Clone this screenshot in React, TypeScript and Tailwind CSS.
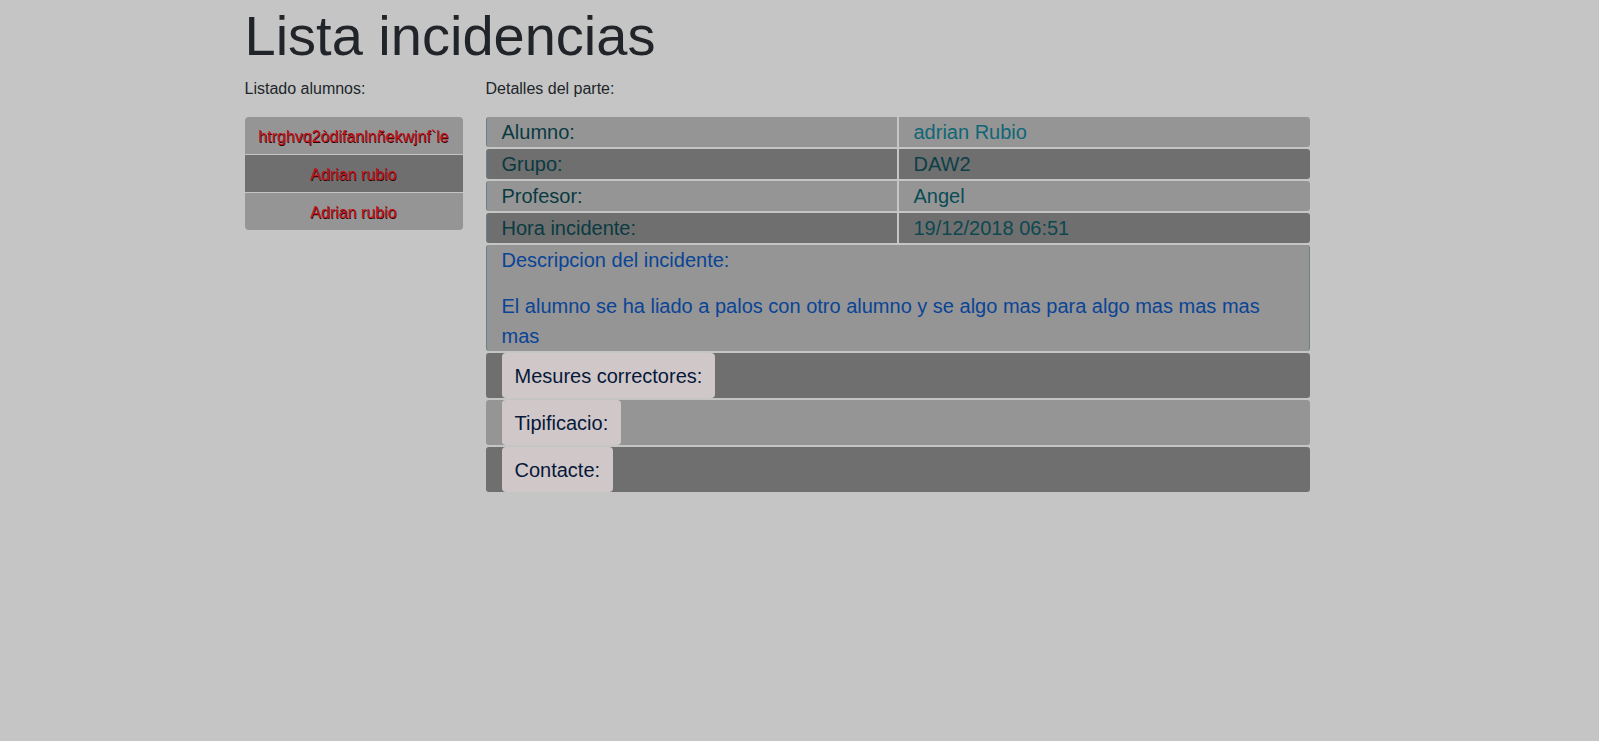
const alumnos = ["htrghvq2òdifanlnñekwjnf`le", "Adrian rubio", "Adrian rubio"];

const detalles = [
  { label: "Alumno:", value: "adrian Rubio", valueColor: "text-[#0f6676]" },
  { label: "Grupo:", value: "DAW2", valueColor: "text-[#0c3f47]" },
  { label: "Profesor:", value: "Angel", valueColor: "text-[#0a4c55]" },
  { label: "Hora incidente:", value: "19/12/2018 06:51", valueColor: "text-[#0c4850]" },
];

const extras = ["Mesures correctores:", "Tipificacio:", "Contacte:"];

function rowBg(i: number) {
  return i % 2 === 0 ? "bg-[#959595]" : "bg-[#6f6f6f]";
}

export default function App() {
  return (
    <div className="min-h-[741px] bg-[#c5c5c5] font-['Liberation_Sans',Arial,sans-serif] text-[#212529]">
      <div className="mx-auto w-[1140px] px-[15px] pt-[2px]">
        <h1 className="text-[56px] font-normal leading-[1.2]">Lista incidencias</h1>

        <div className="mt-[8px] flex gap-[23px]">
          <div className="w-[218px] shrink-0">
            <p className="mb-4 text-base leading-6">Listado alumnos:</p>
            <ul className="flex flex-col gap-px overflow-hidden rounded-[4px]">
              {alumnos.map((a, i) => (
                <li
                  key={i}
                  className={`flex h-[37px] items-center justify-center pt-[2px] text-base text-[#c8121a] [text-shadow:0.6px_0.6px_0_#2a0000] ${rowBg(i)}`}
                >
                  {a}
                </li>
              ))}
            </ul>
          </div>

          <div className="w-[824px] shrink-0">
            <p className="mb-4 text-base leading-6">Detalles del parte:</p>
            <div className="flex flex-col gap-[2px] text-[20px] leading-[30px]">
              {detalles.map((d, i) => (
                <div key={d.label} className="grid grid-cols-2 gap-[2px]">
                  <div className={`h-[30px] rounded-l-[3px] border-l border-[#6c8088] pl-[15px] text-[#0a3a41] ${rowBg(i)}`}>
                    {d.label}
                  </div>
                  <div className={`h-[30px] rounded-r-[3px] pl-[15px] ${d.valueColor} ${rowBg(i)}`}>
                    {d.value}
                  </div>
                </div>
              ))}

              <div className="rounded-[3px] border-x border-[#6c8088] bg-[#959595] px-[15px] text-[#0a4496]">
                <p className="mb-4">Descripcion del incidente:</p>
                <p>El alumno se ha liado a palos con otro alumno y se algo mas para algo mas mas mas mas</p>
              </div>

              {extras.map((e, i) => (
                <div key={e} className={`flex h-[45px] rounded-[3px] pl-[16px] ${rowBg(i + 1)}`}>
                  <span className="flex items-center rounded-[4px] bg-[#d0c8c8] px-[13px] text-[#07183a]">
                    {e}
                  </span>
                </div>
              ))}
            </div>
          </div>
        </div>
      </div>
    </div>
  );
}
